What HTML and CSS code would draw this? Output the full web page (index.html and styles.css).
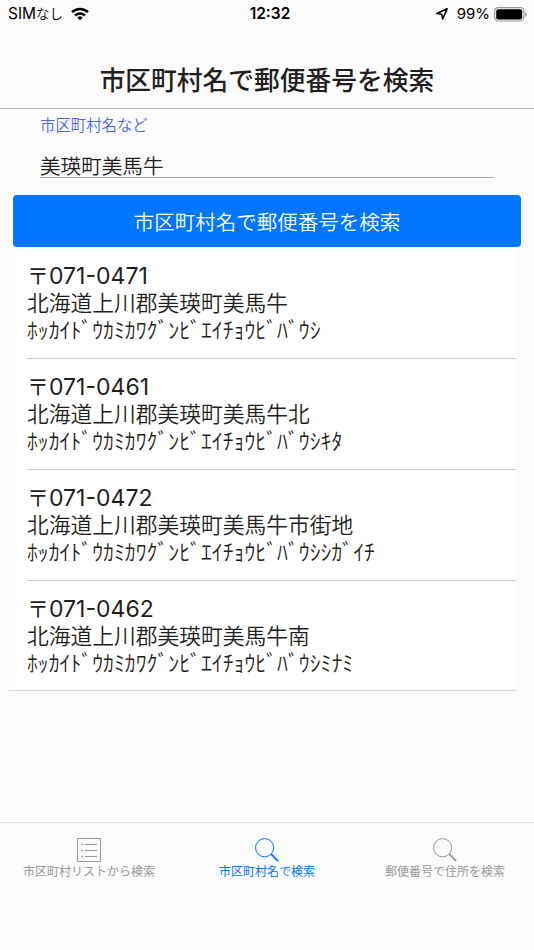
FILE: index.html
```html
<!doctype html>
<html lang="ja">
<head>
  <meta charset="UTF-8">
  <title>市区町村名で郵便番号を検索</title>
  <link rel="stylesheet" href="styles.css">
</head>
<body>
<div class="status">
  <div class="status-left">
    <span class="carrier">SIM<span class="kana">なし</span></span>
    <svg class="wifi" width="18" height="14" viewBox="0 0 18 14" fill="none" stroke="#000" stroke-width="2.5">
      <path d="M1 5.1a11.6 11.6 0 0 1 16 0"/>
      <path d="M4.1 8.5a7.2 7.2 0 0 1 9.8 0"/>
      <path d="M9 13.2l-2.6-2.7a3.8 3.8 0 0 1 5.2 0z" fill="#000" stroke="none"/>
    </svg>
  </div>
  <div class="clock">12:32</div>
  <div class="status-right">
    <svg class="location" width="14" height="14" viewBox="0 0 14 14" fill="none" stroke="#000" stroke-width="1.5" stroke-linejoin="round">
      <path d="M12.2 1.7L1.7 6.5l5 .7.9 4.9z"/>
    </svg>
    <span class="percent">99%</span>
    <svg class="battery" width="34" height="15" viewBox="0 0 34 15">
      <rect x=".6" y=".6" width="29.3" height="13.4" rx="3.6" fill="none" stroke="#999" stroke-width="1.2"/>
      <rect x="2.2" y="2.2" width="26" height="10.2" rx="2" fill="#000"/>
      <path d="M31.2 5v4.8a2.6 2.6 0 0 0 0-4.8z" fill="#999"/>
    </svg>
  </div>
</div>

<h1 class="title">市区町村名で郵便番号を検索</h1>

<div class="search">
  <label class="label" for="city">市区町村名など</label>
  <input class="city" id="city" type="text" value="美瑛町美馬牛">
</div>
<button class="search-button">市区町村名で郵便番号を検索</button>

<ul class="results">
  <li>
    <div class="zip"><span class="mark">〒</span>071-0471</div>
    <div>北海道上川郡美瑛町美馬牛</div>
    <div>ﾎｯｶｲﾄﾞｳｶﾐｶﾜｸﾞﾝﾋﾞｴｲﾁｮｳﾋﾞﾊﾞｳｼ</div>
  </li>
  <li>
    <div class="zip"><span class="mark">〒</span>071-0461</div>
    <div>北海道上川郡美瑛町美馬牛北</div>
    <div>ﾎｯｶｲﾄﾞｳｶﾐｶﾜｸﾞﾝﾋﾞｴｲﾁｮｳﾋﾞﾊﾞｳｼｷﾀ</div>
  </li>
  <li>
    <div class="zip"><span class="mark">〒</span>071-0472</div>
    <div>北海道上川郡美瑛町美馬牛市街地</div>
    <div>ﾎｯｶｲﾄﾞｳｶﾐｶﾜｸﾞﾝﾋﾞｴｲﾁｮｳﾋﾞﾊﾞｳｼｼｶﾞｲﾁ</div>
  </li>
  <li>
    <div class="zip"><span class="mark">〒</span>071-0462</div>
    <div>北海道上川郡美瑛町美馬牛南</div>
    <div>ﾎｯｶｲﾄﾞｳｶﾐｶﾜｸﾞﾝﾋﾞｴｲﾁｮｳﾋﾞﾊﾞｳｼﾐﾅﾐ</div>
  </li>
</ul>

<div class="tabs">
  <div class="tab">
    <svg width="24" height="24" viewBox="0 0 24 24" fill="none" stroke="currentColor">
      <rect x=".5" y=".5" width="23" height="23"/>
      <path d="M8 6.5h12M8 12.5h12M8 18.5h12"/>
      <path d="M4.3 6.5h1.6M4.3 12.5h1.6M4.3 18.5h1.6" stroke-width="1.6"/>
    </svg>
    <span>市区町村リストから検索</span>
  </div>
  <div class="tab active">
    <svg width="24" height="24" viewBox="0 0 24 24" fill="none" stroke="currentColor">
      <circle cx="9.6" cy="9.7" r="9.1"/>
      <path d="M16.2 16.2l6.9 6.9" stroke-width="1.9"/>
    </svg>
    <span>市区町村名で検索</span>
  </div>
  <div class="tab">
    <svg width="24" height="24" viewBox="0 0 24 24" fill="none" stroke="currentColor">
      <circle cx="9.6" cy="9.7" r="9.1"/>
      <path d="M16.2 16.2l6.9 6.9" stroke-width="1.9"/>
    </svg>
    <span>郵便番号で住所を検索</span>
  </div>
</div>
</body>
</html>
```
FILE: styles.css
```css
* {
  box-sizing: border-box;
}

body {
  margin: 0;
  height: 950px;
  display: flex;
  flex-direction: column;
  background: #fbfbfb;
  color: #1f1f21;
  font-family: Inter, "Noto Sans CJK JP", sans-serif;
  font-weight: 350;
  overflow: hidden;
}

.status {
  height: 28px;
  padding: 0 6px 0 8px;
  display: grid;
  grid-template-columns: 1fr auto 1fr;
  align-items: center;
  color: #000;
  font-size: 15.5px;
  font-weight: 400;
  line-height: 28px;
}

.status-left,
.status-right {
  display: flex;
  align-items: center;
}

.status-right {
  justify-content: flex-end;
}

.kana {
  font-size: 13.5px;
  font-weight: 350;
}

.wifi {
  margin-left: 8px;
}

.clock {
  padding-left: 4px;
  font-weight: 600;
}

.percent {
  margin: 0 4px 0 8px;
  font-size: 15px;
}

.title {
  height: 81px;
  margin: 0;
  padding-top: 26px;
  border-bottom: 1px solid #b9b9b9;
  font-size: 25.75px;
  font-weight: 500;
  line-height: 53px;
  text-align: center;
}

.search {
  height: 86px;
  padding: 5px 40px 0;
  display: flex;
  flex-direction: column;
}

.label {
  color: #4f66f5;
  font-size: 15.4px;
  line-height: 24px;
}

.city {
  height: 30px;
  margin-top: 10px;
  padding: 5px 0 0;
  border: 0;
  border-bottom: 1px solid #acacac;
  background: none;
  color: #1f1f21;
  font: inherit;
  font-size: 20.6px;
}

.search-button {
  height: 52px;
  margin: 0 13px;
  padding: 0;
  border: 0;
  border-radius: 4px;
  background: #0076ff;
  color: #fff;
  font: inherit;
  font-size: 20.5px;
}

.results {
  margin: 0 18px 0 9px;
  padding: 0 0 0 18px;
  border-bottom: 1px solid #d8d8d8;
  background: #fff;
  list-style: none;
  font-size: 21.75px;
  line-height: 27px;
}

.results li {
  height: 111px;
  padding-top: 15px;
  border-bottom: 1px solid #ccc;
  white-space: nowrap;
}

.results li:first-child {
  height: 112px;
  padding-top: 16px;
}

.results li:last-child {
  height: 109px;
  border-bottom: 0;
}

.results .zip {
  height: 27px;
  font-size: 23px;
  font-weight: 380;
}

.mark {
  font-family: "Noto Sans CJK JP", sans-serif;
  font-size: 22px;
  font-weight: 350;
  line-height: 1;
}

.tabs {
  height: 62px;
  margin-top: auto;
  margin-bottom: 66px;
  display: grid;
  grid-template-columns: repeat(3, 1fr);
  border-top: 1px solid #ddd;
}

.tab {
  padding-top: 15px;
  display: flex;
  flex-direction: column;
  align-items: center;
  color: #999;
  font-size: 12px;
  line-height: 20px;
  font-weight: 400;
}

.tab.active {
  color: #0076ff;
}
```
